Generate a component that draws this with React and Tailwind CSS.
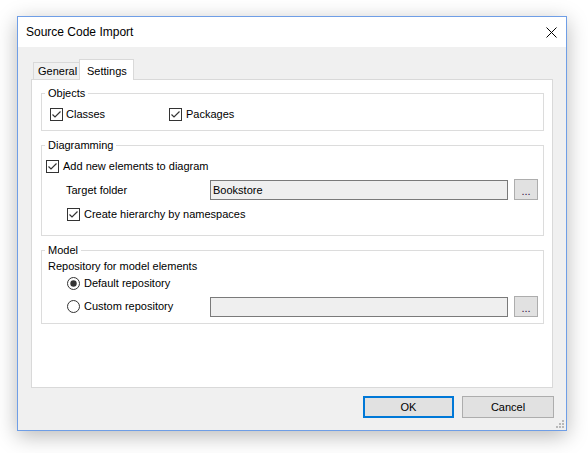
const font = { fontFamily: '"Liberation Sans", Arial, sans-serif' };

const CheckBox = ({ checked }) => (
    <svg width="13" height="13" viewBox="0 0 13 13" className="shrink-0">
        <rect x="0.5" y="0.5" width="12" height="12" fill="#fff" stroke="#333" />
        {checked && <polyline points="2.5,6.5 5,9 10.5,3.5" fill="none" stroke="#333" strokeWidth="1.2" />}
    </svg>
);

const Radio = ({ checked }) => (
    <svg width="13" height="13" viewBox="0 0 13 13" className="shrink-0">
        <circle cx="6.5" cy="6.5" r="6" fill="#fff" stroke="#333" />
        {checked && <circle cx="6.5" cy="6.5" r="3.2" fill="#333" />}
    </svg>
);

const Group = ({ label, className, children }) => (
    <div className={`relative ml-[9px] w-[503px] border border-[#dcdcdc] ${className}`}>
        <span className="absolute -top-[8px] left-[3px] bg-white px-[3px] leading-[14px]">{label}</span>
        {children}
    </div>
);

const Browse = () => (
    <button className="ml-[6px] flex h-[21px] w-[24px] items-end justify-center border border-[#adadad] bg-[#e1e1e1] pb-[3px] text-[11px] leading-[10px] text-[#301040]">
        ...
    </button>
);

const App = () => {
    return (
        <div className="h-[453px] w-[588px] bg-white pl-[17px] pt-[16px] text-[11px] text-black" style={font}>
            <div className="relative flex h-[415px] w-[550px] flex-col border border-[#6f9ee6] shadow-[0_5px_20px_rgba(0,0,0,0.28)]">
                {/* title bar */}
                <div className="flex h-[30px] items-center justify-between bg-white pl-[8px] pr-[9px]">
                    <span className="text-[12px]">Source Code Import</span>
                    <svg width="11" height="11" viewBox="0 0 11 11">
                        <path d="M0.5 0.5L10.5 10.5M10.5 0.5L0.5 10.5" stroke="#000" strokeWidth="1" />
                    </svg>
                </div>

                <div className="flex flex-1 flex-col bg-[#f0f0f0] pl-[13px] pt-[12px]">
                    {/* tabs */}
                    <div className="-mb-px ml-[2px] flex">
                        <div className="mb-px mt-[3px] flex h-[17px] w-[47px] items-center border border-b-0 border-[#d9d9d9] bg-[#f0f0f0] pl-[4px]">
                            General
                        </div>
                        <div className="relative z-10 -ml-px flex h-[21px] w-[55px] items-start border border-b-0 border-[#d9d9d9] bg-white pl-[7px] pt-[3px]">
                            Settings
                        </div>
                    </div>

                    {/* panel */}
                    <div className="h-[309px] w-[522px] border border-[#d9d9d9] bg-white pt-[13px]">
                        <Group label="Objects" className="h-[38px]">
                            <div className="flex items-center pl-[8px] pt-[14px]">
                                <div className="flex w-[119px] items-center gap-[3px]">
                                    <CheckBox checked />
                                    <span className="leading-[13px]">Classes</span>
                                </div>
                                <div className="flex items-center gap-[4px]">
                                    <CheckBox checked />
                                    <span className="leading-[13px]">Packages</span>
                                </div>
                            </div>
                        </Group>

                        <Group label="Diagramming" className="mt-[14px] h-[91px]">
                            <div className="flex items-center gap-[4px] pl-[4px] pt-[14px]">
                                <CheckBox checked />
                                <span className="leading-[13px]">Add new elements to diagram</span>
                            </div>
                            <div className="mt-[6px] flex h-[21px] items-start pl-[24px]">
                                <span className="mt-[4px] w-[144px] leading-[14px]">Target folder</span>
                                <div className="mt-px flex h-[20px] w-[298px] items-center border border-[#7a7a7a] bg-[#efefef] pl-[2px]">
                                    Bookstore
                                </div>
                                <Browse />
                            </div>
                            <div className="mt-[8px] flex items-center gap-[4px] pl-[25px]">
                                <CheckBox checked />
                                <span className="leading-[13px]">Create hierarchy by namespaces</span>
                            </div>
                        </Group>

                        <Group label="Model" className="mt-[14px] h-[74px]">
                            <div className="mt-[7px] pl-[6px] leading-[16px]">Repository for model elements</div>
                            <div className="mt-[3px] flex items-center gap-[4px] pl-[25px]">
                                <Radio checked />
                                <span className="leading-[13px]">Default repository</span>
                            </div>
                            <div className="mt-[6px] flex h-[21px] items-center pl-[25px]">
                                <div className="flex w-[143px] items-center gap-[4px]">
                                    <Radio />
                                    <span className="leading-[13px]">Custom repository</span>
                                </div>
                                <div className="mt-px h-[20px] w-[298px] self-start border border-[#7a7a7a] bg-[#efefef]" />
                                <Browse />
                            </div>
                        </Group>
                    </div>

                    {/* buttons */}
                    <div className="mt-[8px] flex justify-end gap-[8px] pr-[12px]">
                        <button className="h-[22px] w-[91px] border-2 border-[#0078d7] bg-[#e1e1e1] text-[11px]">OK</button>
                        <button className="h-[22px] w-[92px] border border-[#adadad] bg-[#e1e1e1] text-[11px]">Cancel</button>
                    </div>
                </div>

                {/* resize grip */}
                <svg width="8" height="8" viewBox="0 0 8 8" className="absolute bottom-[2px] right-[2px]">
                    <rect x="6" y="0" width="2" height="2" fill="#b8b8b8" />
                    <rect x="3" y="3" width="2" height="2" fill="#b8b8b8" />
                    <rect x="6" y="3" width="2" height="2" fill="#b8b8b8" />
                    <rect x="0" y="6" width="2" height="2" fill="#b8b8b8" />
                    <rect x="3" y="6" width="2" height="2" fill="#b8b8b8" />
                    <rect x="6" y="6" width="2" height="2" fill="#b8b8b8" />
                </svg>
            </div>
        </div>
    );
};

export default App;
